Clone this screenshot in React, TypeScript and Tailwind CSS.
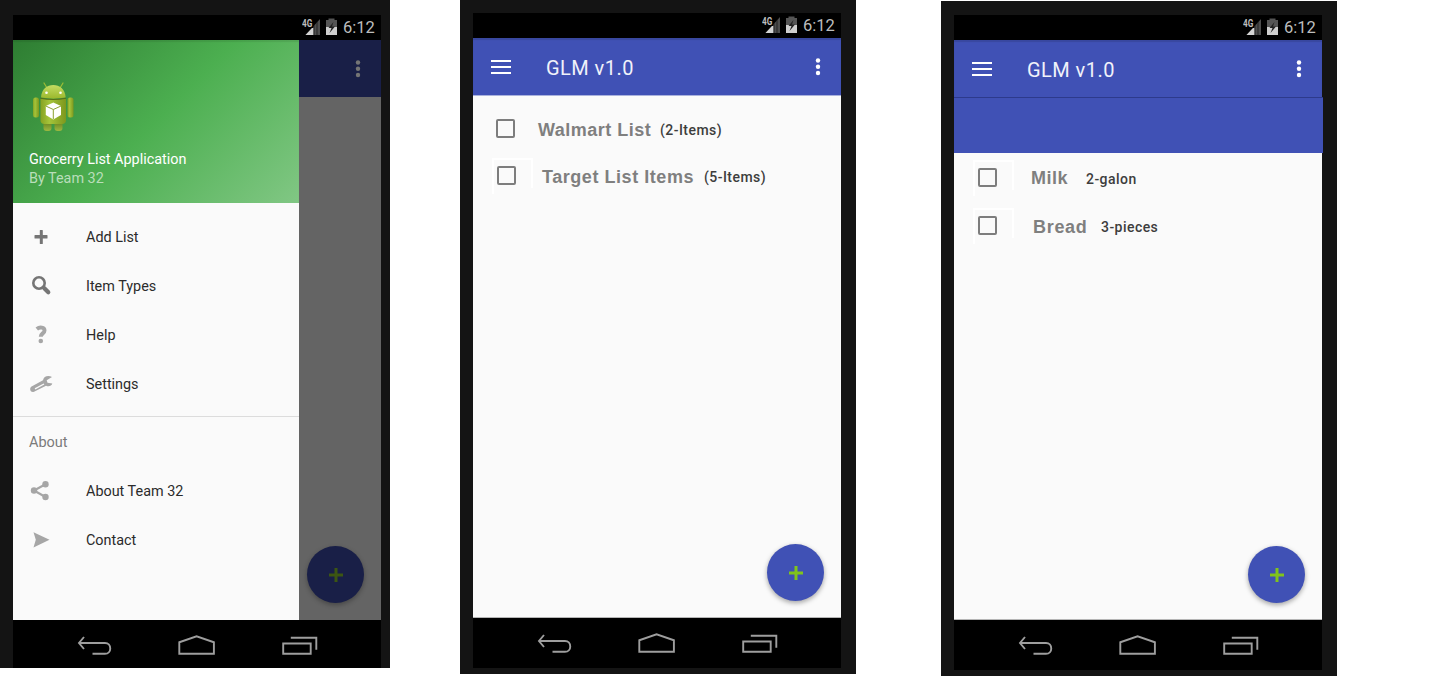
import type { ReactNode } from "react";

function StatusBar() {
  return (
    <div className="flex h-[25px] shrink-0 justify-end bg-black pr-[6px] font-['Roboto',sans-serif] text-[#bdbdbd]">
      <div className="relative mt-[3px] h-[20px] w-[41px]">
        <svg className="h-[20px] w-[41px]" viewBox="0 0 41 20">
          <path d="M18 1v16H3.500z" fill="#4d4d4d" />
          <path d="M3.500 17l8-8.500V17z" fill="#d4d4d4" />
          <path d="M12 7v10M15 4v13" stroke="#111" strokeWidth="0.700" />
          <path d="M0 0h11.500v10H0z" fill="#000" />
          <path d="M24 2h2.500V0.500h6V2H35v7H24z" fill="#555" />
          <path d="M24 9h11v8H24z" fill="#cfcfcf" />
          <path d="M31.500 4l-5 6h3l-2 5 5.500-6.500h-3z" fill="#222" />
        </svg>
        <span className="absolute left-0 top-0 origin-left scale-x-[0.78] text-[10.500px] font-bold leading-[11px]">4G</span>
      </div>
      <span className="w-[32px] whitespace-nowrap text-[16.500px] leading-[26px]">6:12</span>
    </div>
  );
}

function NavBar({ tall = true }: { tall?: boolean }) {
  return (
    <div className={tall ? "h-[50px] shrink-0 bg-black" : "h-[48px] shrink-0 bg-black"}>
      <svg className="h-[48px] w-[368px]" viewBox="0 0 368 48" fill="none" stroke="#9e9e9e" strokeWidth="1.900">
        <path d="M71 17l-5 6 5 6M66 23h26c7 0 7 10.800 0 10.800H79.500" />
        <path d="M166.300 33.800V22.300L183.600 16.300l17.300 6v11.500z" />
        <path d="M270.200 23.500h27.500v10.300h-27.500zM277.800 17.800h25.500v12" />
      </svg>
    </div>
  );
}

function AppBar({ dim = false }: { dim?: boolean }) {
  return (
    <div
      className={
        dim
          ? "flex h-[57px] shrink-0 items-center justify-end bg-[#191f47] pr-[20px]"
          : "flex h-[57px] shrink-0 items-center bg-[#4051b5] pl-[18px] pr-[20px] text-white shadow-[inset_0_2px_1px_rgba(0,0,0,0.12)]"
      }
    >
      {!dim && (
        <>
          <svg className="h-[14px] w-[20px]" viewBox="0 0 20 14" stroke="#fff" strokeWidth="2">
            <path d="M0 1h20M0 7h20M0 13h20" />
          </svg>
          <span className="ml-[35px] flex-1 pt-[2px] font-['Roboto',sans-serif] text-[20px] leading-[24px] tracking-[0.450px] text-[#f0f2fa]">
            GLM v1.0
          </span>
        </>
      )}
      <svg className="h-[18px] w-[6px]" viewBox="0 0 6 18" fill={dim ? "#757575" : "#fff"}>
        <circle cx="3" cy="2.500" r="2.200" />
        <circle cx="3" cy="8.700" r="2.200" />
        <circle cx="3" cy="15" r="2.200" />
      </svg>
    </div>
  );
}

function Fab({ dim = false }: { dim?: boolean }) {
  return (
    <button
      className={
        dim
          ? "absolute bottom-[17px] right-[17px] flex size-[57px] items-center justify-center rounded-full bg-[#191f47] shadow-[0_2px_5px_rgba(0,0,0,0.3)]"
          : "absolute bottom-[16px] right-[17px] flex size-[57px] items-center justify-center rounded-full bg-[#4051b5] shadow-[0_2px_5px_rgba(0,0,0,0.35)]"
      }
      aria-label="Add"
    >
      <svg className="size-[14px]" viewBox="0 0 14 14">
        <path d="M5.500 0h3v5.500H14v3H8.500V14h-3V8.500H0v-3h5.500z" fill={dim ? "#3c5612" : "#80c41c"} />
      </svg>
    </button>
  );
}

function Checkbox({ patch = true }: { patch?: boolean }) {
  return (
    <span className="relative flex size-[19px] shrink-0">
      {patch && (
        <span className="absolute -left-[5px] -top-[8px] h-[36px] w-[41px] border-l-2 border-t-2 border-white">
          <span className="absolute right-0 top-0 h-[28px] w-[2px] bg-white" />
        </span>
      )}
      <span className="relative size-[19px] rounded-[2px] border-2 border-[#7d7d7d]" />
    </span>
  );
}

function AndroidLogo() {
  return (
    <svg className="h-[50px] w-[42px]" viewBox="0 0 42 50">
      <defs>
        <linearGradient id="body" x1="0" x2="1" y1="0" y2="0">
          <stop offset="0" stopColor="#87a222" />
          <stop offset="0.35" stopColor="#a5c43a" />
          <stop offset="1" stopColor="#7d971d" />
        </linearGradient>
        <linearGradient id="head" x1="0" x2="0" y1="0" y2="1">
          <stop offset="0" stopColor="#c3dc62" />
          <stop offset="1" stopColor="#9bb82c" />
        </linearGradient>
        <linearGradient id="leg" x1="0" x2="0" y1="0" y2="1">
          <stop offset="0" stopColor="#5c7517" />
          <stop offset="1" stopColor="#9db841" />
        </linearGradient>
      </defs>
      <path d="M12 1l3 5M31 1l-3 5" stroke="#9fbd35" strokeWidth="1.200" strokeLinecap="round" />
      <rect x="11.500" y="38" width="8" height="11" rx="3" fill="url(#leg)" />
      <rect x="22.500" y="38" width="8" height="11" rx="3" fill="url(#leg)" />
      <rect x="1" y="15.500" width="6" height="20" rx="2.500" fill="url(#body)" />
      <rect x="35.500" y="15.500" width="6" height="20" rx="2.500" fill="url(#body)" />
      <path d="M8.500 17h25.500v21q0 4-4 4H12.500q-4 0-4-4z" fill="url(#body)" />
      <path d="M9 15.500C9.500 7 15 3 21.300 3S33 7 33.700 15.500q-12.500 2.300-24.700 0z" fill="url(#head)" />
      <path d="M8.500 16.300q12.800 2.500 25.500 0" stroke="#587018" fill="none" strokeWidth="1.100" />
      <circle cx="14.500" cy="10.800" r="1.300" fill="#fff" />
      <circle cx="28.500" cy="10.800" r="1.300" fill="#fff" />
      <path d="M21.300 20.500l7.700 3.400v9L21.300 37.500l-7.500-4.600v-9z" fill="#fff" />
      <path d="M13.800 24l7.500 3.500L29 24M21.300 27.500V37" stroke="#8ba130" fill="none" strokeWidth="1" />
    </svg>
  );
}

const menuIcons: Record<string, ReactNode> = {
  add: <path d="M11.300 5h2q.5 0 .5.500V10h4.200q.500 0 .500.500v2.500q0 .500-.500.500h-4.200v5q0 .500-.500.500h-2q-.500 0-.500-.500v-5H6q-.500 0-.500-.500v-2.500q0-.500.500-.500h4.800V5.500q0-.500.500-.500z" fill="#757575" />,
  search: (
    <g fill="none" stroke="#757575">
      <circle cx="10" cy="9" r="5.700" strokeWidth="2.600" />
      <path d="M14 13l2 2" strokeWidth="2.600" />
      <path d="M15.300 14.300l4 4" strokeWidth="4.200" strokeLinecap="round" />
    </g>
  ),
  help: (
    <g fill="none" stroke="#a6a6a6">
      <path d="M7.800 6c3-2.400 7.700-1.700 7.700 1.400 0 3-3.700 3-3.700 6.300" strokeWidth="4" />
      <circle cx="11.800" cy="18" r="2.300" fill="#a6a6a6" stroke="none" />
    </g>
  ),
  settings: (
    <g>
      <path d="M23 5c-3.500-2.200-8.500-.9-9 3.300L3 14.300c-3.500 2-1.500 6.700 2 5.500L17 13.700c2.800 1.200 5.500.3 6.300-2.200l-4.800-.8-.8-2.400z" fill="#a6a6a6" />
      <path d="M6 16.800l9-4.800" stroke="#fafafa" strokeWidth="1.400" />
    </g>
  ),
  share: (
    <g fill="#a6a6a6">
      <circle cx="5" cy="11.500" r="3.200" />
      <circle cx="16.500" cy="5.200" r="3.200" />
      <circle cx="16.500" cy="18" r="3.200" />
      <path d="M16.500 5.200L5 11.500l11.500 6.500" fill="none" stroke="#a6a6a6" strokeWidth="2.200" />
    </g>
  ),
  send: <path d="M4.500 4.200L20.500 11.700 4.500 19.400 6.800 11.700z" fill="#a6a6a6" />,
};

function MenuRow({ icon, label }: { icon: string; label: string }) {
  return (
    <li className="flex h-[49px] items-center pl-[16px]">
      <svg className="size-[24px]" viewBox="0 0 24 24">{menuIcons[icon]}</svg>
      <span className="ml-[33px] pt-[2px] text-[14.400px] leading-[20px] text-[#2b2b2b]">{label}</span>
    </li>
  );
}

function DrawerScreen() {
  return (
    <section className="flex h-[668px] w-[390px] shrink-0 flex-col bg-[#141414] pl-[13px] pr-[9px] pt-[15px]">
      <StatusBar />
      <div className="flex h-[580px] shrink-0">
        <aside className="flex w-[286px] flex-col bg-[#fafafa] font-['Roboto',sans-serif]">
          <header className="flex h-[163px] shrink-0 flex-col bg-[linear-gradient(135deg,#2e7d32_0%,#4caf50_50%,#81c784_100%)] pl-[16px] pt-[42px] shadow-[inset_0_2px_1px_rgba(0,0,0,0.08)]">
            <div className="ml-[3px]"><AndroidLogo /></div>
            <h2 className="mt-[18px] text-[14.400px] leading-[20px] text-white">Grocerry List Application</h2>
            <p className="text-[14.400px] leading-[18px] text-[#b9deba]">By Team 32</p>
          </header>
          <ul className="pt-[9px]">
            <MenuRow icon="add" label="Add List" />
            <MenuRow icon="search" label="Item Types" />
            <MenuRow icon="help" label="Help" />
            <MenuRow icon="settings" label="Settings" />
          </ul>
          <div className="mt-[8px] border-t border-[#dcdcdc] pt-[16px]">
            <h3 className="pl-[16px] text-[14.500px] leading-[20px] text-[#7b7b7b]">About</h3>
          </div>
          <ul className="pt-[13px]">
            <MenuRow icon="share" label="About Team 32" />
            <MenuRow icon="send" label="Contact" />
          </ul>
        </aside>
        <div className="relative flex flex-1 flex-col bg-[#646464]">
          <AppBar dim />
          <Fab dim />
        </div>
      </div>
      <NavBar tall={false} />
    </section>
  );
}

function Amount({ children }: { children: ReactNode }) {
  return (
    <span className="whitespace-nowrap pt-[4px] font-['Roboto',sans-serif] text-[14px] font-medium leading-[18px] tracking-[0.450px] text-[#3d3d3d]">
      {children}
    </span>
  );
}

function ListsScreen() {
  return (
    <section className="ml-[70px] flex h-[674px] w-[396px] shrink-0 flex-col bg-[#141414] pl-[13px] pr-[15px] pt-[13px]">
      <StatusBar />
      <AppBar />
      <main className="relative h-[523px] shrink-0 border-b border-[#b5b5b5] border-t border-t-[#aab2dd] bg-[#fafafa] font-['Liberation_Sans',sans-serif]">
        <div className="flex h-[48px] items-center pl-[23px] pt-[16px]">
          <Checkbox patch={false} />
          <span className="ml-[23px] w-[122px] whitespace-nowrap pt-[3px] text-[18px] font-bold leading-[24px] tracking-[0.500px] text-[#7f7f7f]">Walmart List</span>
          <Amount>(2-Items)</Amount>
        </div>
        <div className="flex h-[46px] items-center pl-[24px] pt-[16px]">
          <Checkbox />
          <span className="ml-[26px] w-[162px] whitespace-nowrap pt-[3px] text-[18px] font-bold leading-[24px] tracking-[0.550px] text-[#7f7f7f]">Target List Items</span>
          <Amount>(5-Items)</Amount>
        </div>
        <Fab />
      </main>
      <NavBar />
    </section>
  );
}

function ItemsScreen() {
  return (
    <section className="ml-[85px] mt-px flex h-[675px] w-[396px] shrink-0 flex-col bg-[#141414] pl-[13px] pr-[15px] pt-[14px]">
      <StatusBar />
      <AppBar />
      <div className="h-[56px] w-[369px] shrink-0 border-t border-[#2d3a8c] bg-[#4051b5]" />
      <main className="relative h-[467px] shrink-0 border-b border-[#b5b5b5] bg-[#fafafa] font-['Liberation_Sans',sans-serif]">
        <div className="flex h-[48px] items-center pl-[24px]">
          <Checkbox />
          <span className="ml-[34px] w-[55px] whitespace-nowrap pt-[2px] text-[18px] font-bold leading-[24px] tracking-[0.500px] text-[#7f7f7f]">Milk</span>
          <Amount>2-galon</Amount>
        </div>
        <div className="flex h-[48px] items-center pl-[24px]">
          <Checkbox />
          <span className="ml-[36px] w-[68px] whitespace-nowrap pt-[3px] text-[18px] font-bold leading-[24px] tracking-[0.700px] text-[#7f7f7f]">Bread</span>
          <Amount>3-pieces</Amount>
        </div>
        <Fab />
      </main>
      <NavBar />
    </section>
  );
}

export default function App() {
  return (
    <div className="flex h-[677px] w-[1454px] items-start overflow-hidden bg-white">
      <DrawerScreen />
      <ListsScreen />
      <ItemsScreen />
    </div>
  );
}
